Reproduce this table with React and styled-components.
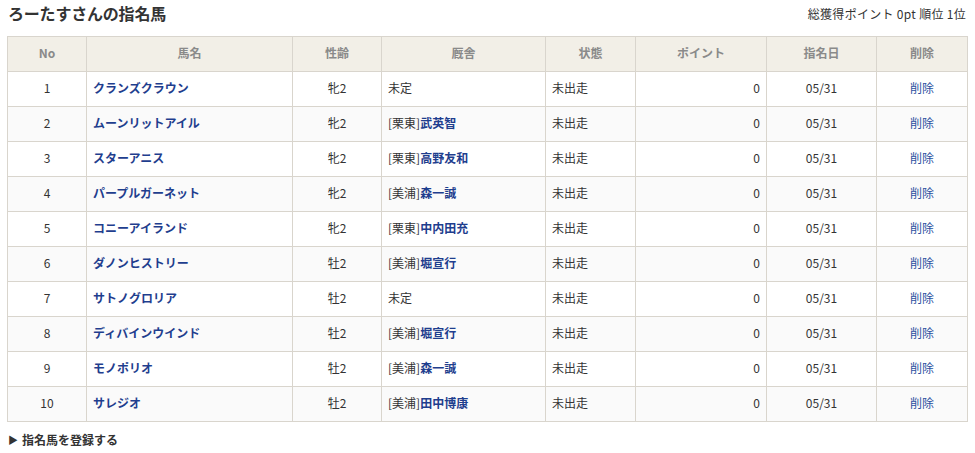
import React from 'react';
import styled, { createGlobalStyle } from 'styled-components';

const GlobalStyle = createGlobalStyle`
  body {
    margin: 0;
    background: #fff;
    font-family: "Noto Sans CJK JP", "Noto Sans", sans-serif;
    color: #333;
  }
`;

const horses = [
  { no: 1, name: 'クランズクラウン', sex: '牝2', stable: null, trainer: null },
  { no: 2, name: 'ムーンリットアイル', sex: '牝2', stable: '栗東', trainer: '武英智' },
  { no: 3, name: 'スターアニス', sex: '牝2', stable: '栗東', trainer: '高野友和' },
  { no: 4, name: 'パープルガーネット', sex: '牝2', stable: '美浦', trainer: '森一誠' },
  { no: 5, name: 'コニーアイランド', sex: '牝2', stable: '栗東', trainer: '中内田充' },
  { no: 6, name: 'ダノンヒストリー', sex: '牡2', stable: '美浦', trainer: '堀宣行' },
  { no: 7, name: 'サトノグロリア', sex: '牡2', stable: null, trainer: null },
  { no: 8, name: 'ディバインウインド', sex: '牡2', stable: '美浦', trainer: '堀宣行' },
  { no: 9, name: 'モノポリオ', sex: '牡2', stable: '美浦', trainer: '森一誠' },
  { no: 10, name: 'サレジオ', sex: '牡2', stable: '美浦', trainer: '田中博康' },
];

const columns = [
  { label: 'No', width: 79 },
  { label: '馬名', width: 206 },
  { label: '性齢', width: 89 },
  { label: '厩舎', width: 164 },
  { label: '状態', width: 90 },
  { label: 'ポイント', width: 131 },
  { label: '指名日', width: 110 },
  { label: '削除', width: 91 },
];

function App() {
  return (
    <Page>
      <GlobalStyle />
      <TitleBar>
        <Title>ろーたすさんの指名馬</Title>
        <Summary>総獲得ポイント 0pt 順位 1位</Summary>
      </TitleBar>
      <Table>
        <colgroup>
          {columns.map((c) => (
            <col key={c.label} style={{ width: c.width }} />
          ))}
        </colgroup>
        <thead>
          <tr>
            {columns.map((c) => (
              <Th key={c.label}>{c.label}</Th>
            ))}
          </tr>
        </thead>
        <tbody>
          {horses.map((h) => (
            <Row key={h.no}>
              <Td $align="center">{h.no}</Td>
              <Td>
                <HorseLink href="#">{h.name}</HorseLink>
              </Td>
              <Td $align="center">{h.sex}</Td>
              <Td>
                {h.stable ? (
                  <>
                    [{h.stable}]<HorseLink href="#">{h.trainer}</HorseLink>
                  </>
                ) : (
                  '未定'
                )}
              </Td>
              <Td>未出走</Td>
              <Td $align="right">0</Td>
              <Td $align="center">05/31</Td>
              <Td $align="center">
                <DeleteLink href="#">削除</DeleteLink>
              </Td>
            </Row>
          ))}
        </tbody>
      </Table>
      <RegisterLink>
        <Arrow>▶</Arrow>指名馬を登録する
      </RegisterLink>
    </Page>
  );
}

export default App;

const Page = styled.div`
  width: 975px;
  padding: 0 8px 0 7px;
  box-sizing: border-box;
`;

const TitleBar = styled.div`
  display: flex;
  justify-content: space-between;
  align-items: center;
  height: 26px;
  padding: 0 1px 0 1px;
  margin-bottom: 10px;
`;

const Title = styled.h1`
  margin: 0;
  font-size: 16px;
  font-weight: bold;
  color: #333;
  letter-spacing: -0.2px;
`;

const Summary = styled.span`
  font-size: 12px;
  letter-spacing: 0.3px;
  color: #333;
`;

const Table = styled.table`
  width: 960px;
  border-collapse: collapse;
  table-layout: fixed;
  font-size: 12px;
  line-height: 18px;
`;

const Th = styled.th`
  height: 32px;
  padding: 0 6px 2px;
  background: #f2efe7;
  border: 1px solid #d9d5cd;
  color: #8a8a8a;
  font-weight: bold;
  text-align: center;
`;

const Row = styled.tr`
  &:nth-child(even) {
    background: #fafafa;
  }
`;

const Td = styled.td`
  height: 32px;
  padding: 0 6px 2px;
  border: 1px solid #d9d5cd;
  text-align: ${(p) => p.$align || 'left'};
  color: #333;
  white-space: nowrap;
`;

const HorseLink = styled.a`
  color: #1f3e8e;
  font-weight: bold;
  text-decoration: none;
`;

const DeleteLink = styled.a`
  color: #2a4fa0;
  text-decoration: none;
`;

const RegisterLink = styled.div`
  display: flex;
  align-items: center;
  gap: 4px;
  margin-top: 9px;
  padding-left: 1px;
  font-size: 12px;
  font-weight: bold;
  color: #333;
`;

const Arrow = styled.span`
  font-size: 10px;
`;
